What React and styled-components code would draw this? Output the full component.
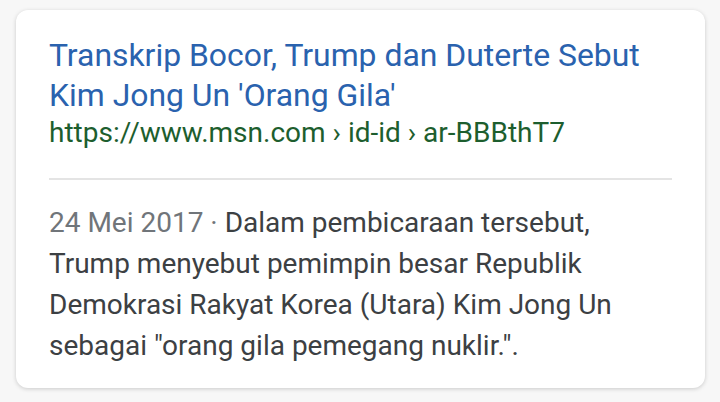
import React from "react";
import styled, { createGlobalStyle } from "styled-components";

const GlobalStyle = createGlobalStyle`
  html, body {
    margin: 0;
    padding: 0;
    background: #f7f7f7;
    font-family: Roboto, "Noto Sans", Arial, sans-serif;
  }
`;

const Page = styled.div`
  width: 720px;
  height: 402px;
  padding: 10px 15px 14px 16px;
  box-sizing: border-box;
`;

const Card = styled.div`
  height: 100%;
  box-sizing: border-box;
  background: #ffffff;
  border-radius: 12px;
  box-shadow: 0 1px 4px rgba(0, 0, 0, 0.18);
  padding: 25px 33px 0 33px;
`;

const Title = styled.a`
  display: block;
  font-size: 31.9px;
  line-height: 40px;
  color: #2a62ae;
  text-decoration: none;
`;

const Url = styled.div`
  font-size: 28px;
  line-height: 36px;
  color: #1d5e2e;
`;

const Divider = styled.hr`
  border: none;
  border-top: 2px solid #e4e4e4;
  margin: 27px 0 22px;
`;

const Snippet = styled.p`
  margin: 0;
  font-size: 28px;
  line-height: 41px;
  color: #3c4043;
`;

const DateText = styled.span`
  color: #70757a;
`;

export default function App() {
  return (
    <>
      <GlobalStyle />
      <Page>
        <Card>
          <Title href="#">Transkrip Bocor, Trump dan Duterte Sebut Kim Jong Un 'Orang Gila'</Title>
          <Url>https://www.msn.com › id-id › ar-BBBthT7</Url>
          <Divider />
          <Snippet>
            <DateText>24 Mei 2017 · </DateText>
            Dalam pembicaraan tersebut, Trump menyebut pemimpin besar Republik Demokrasi Rakyat Korea (Utara) Kim Jong Un sebagai "orang gila pemegang nuklir.".
          </Snippet>
        </Card>
      </Page>
    </>
  );
}
